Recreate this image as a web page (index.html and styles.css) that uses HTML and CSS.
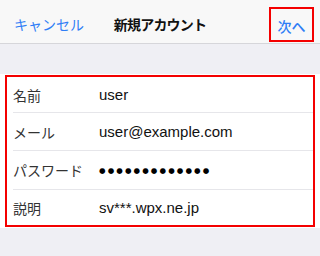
FILE: index.html
```html
<!DOCTYPE html>
<html lang="ja">
<head>
<meta charset="utf-8">
<link rel="stylesheet" href="styles.css">
</head>
<body>
<header class="nav">
  <span class="nav-cancel">キャンセル</span>
  <span class="nav-title">新規アカウント</span>
  <span class="nav-next-wrap"><span class="nav-next">次へ</span></span>
</header>
<section class="form">
  <div class="form-box">
    <div class="row row-1"><span class="label">名前</span><span class="value">user</span></div>
    <div class="row row-2"><span class="label">メール</span><span class="value">user@example.com</span></div>
    <div class="row row-3"><span class="label">パスワード</span><span class="value dots">●●●●●●●●●●●●●</span></div>
    <div class="row row-4"><span class="label">説明</span><span class="value">sv***.wpx.ne.jp</span></div>
  </div>
</section>
</body>
</html>
```
FILE: styles.css
```css
html, body {
  margin: 0;
  padding: 0;
}
body {
  width: 320px;
  height: 256px;
  background: #efeff4;
  font-family: "Liberation Sans", "Noto Sans CJK JP", sans-serif;
  overflow: hidden;
}
.nav {
  box-sizing: border-box;
  height: 44px;
  padding-top: 7px;
  background: #f8f8f8;
  border-bottom: 1px solid #d6d6da;
  display: grid;
  grid-template-columns: 1fr auto 1fr;
  align-items: start;
}
.nav-cancel {
  font-family: "Noto Sans CJK JP", sans-serif;
  font-size: 14px;
  line-height: 35px;
  color: #2f7ef6;
  padding-left: 14px;
}
.nav-title {
  font-family: "Noto Sans CJK JP", sans-serif;
  font-size: 14px;
  font-weight: bold;
  letter-spacing: -0.8px;
  line-height: 35px;
  color: #111;
}
.nav-next-wrap {
  display: flex;
  justify-content: flex-end;
  padding-right: 6px;
}
.nav-next {
  box-sizing: border-box;
  width: 45px;
  height: 35px;
  border: 2px solid #f40000;
  display: flex;
  align-items: center;
  justify-content: center;
  font-family: "Noto Sans CJK JP", sans-serif;
  font-size: 14px;
  font-weight: 500;
  color: #2f7ef6;
  padding-top: 2px;
}
.form {
  margin-top: 30px;
  background: #fff;
  padding-top: 1px;
  padding-bottom: 1px;
}
.form-box {
  margin: 0 5px;
  border: 2px solid #f40000;
}
.row {
  margin-left: 6px;
  display: flex;
  align-items: center;
}
.row + .row {
  border-top: 1px solid #e6e6ea;
}
.row-1 { height: 35px; }
.row-2 { height: 37px; }
.row-3 { height: 38px; }
.row-4 { height: 35px; }
.label {
  width: 86px;
  font-family: "Noto Sans CJK JP", sans-serif;
  font-size: 14px;
  color: #333;
}
.value {
  font-size: 15px;
  color: #111;
}
.dots {
  font-family: "DejaVu Sans", sans-serif;
  font-size: 7.5px;
  letter-spacing: 2.1px;
  color: #000;
}
```
